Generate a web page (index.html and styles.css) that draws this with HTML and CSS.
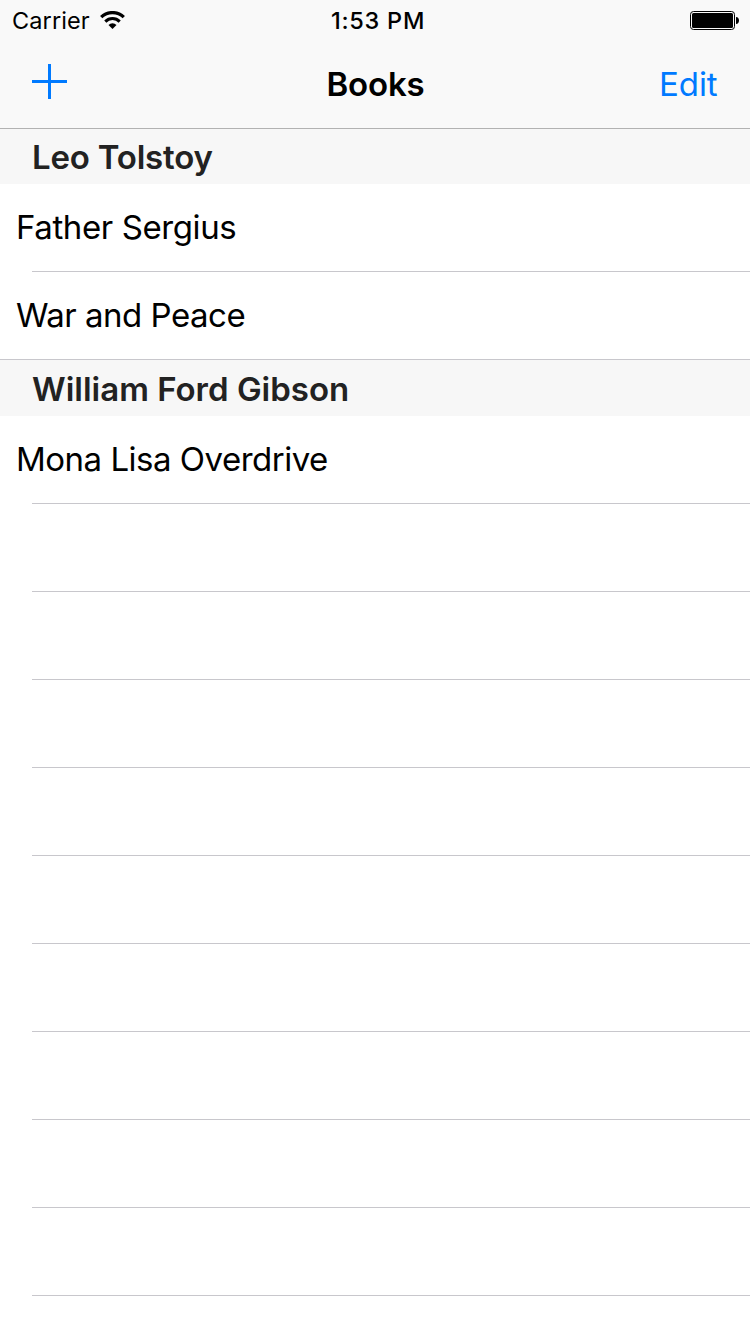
FILE: index.html
```html
<!DOCTYPE html>
<html lang="en">
<head>
<meta charset="utf-8">
<title>Books</title>
<link rel="stylesheet" href="styles.css">
</head>
<body>
<header class="top">
  <div class="status">
    <div class="carrier"><span class="carrier-name">Carrier</span>
      <svg class="wifi" width="25" height="18" viewBox="0 0 25 18"><path d="M1.2 6.2a16 16 0 0 1 22.6 0" fill="none" stroke="#000" stroke-width="3.2"/><path d="M5.3 10.6a10.2 10.2 0 0 1 14.4 0" fill="none" stroke="#000" stroke-width="3"/><path d="M12.5 18l-4-4.1a5.8 5.8 0 0 1 8 0z"/></svg>
    </div>
    <time class="clock">1:53 PM</time>
    <svg class="battery" width="49" height="19" viewBox="0 0 49 19"><rect x=".5" y=".5" width="44" height="18" rx="3" fill="none" stroke="#000"/><rect x="2" y="2" width="41" height="15" rx="1.5"/><path d="M46 6c4 0 4 7 0 7z"/></svg>
  </div>
  <nav class="nav">
    <svg class="add" width="35" height="35" viewBox="0 0 35 35"><path d="M0 17.5h35M17.5 0v35" stroke="#007aff" stroke-width="3"/></svg>
    <h1 class="title">Books</h1>
    <span class="edit">Edit</span>
  </nav>
</header>
<main>
  <h2 class="section tolstoy"><span>Leo Tolstoy</span></h2>
  <ul class="rows">
    <li class="row"><span class="father">Father Sergius</span></li>
    <li class="row last"><span>War and Peace</span></li>
  </ul>
  <h2 class="section second"><span>William Ford Gibson</span></h2>
  <ul class="rows">
    <li class="row"><span>Mona Lisa Overdrive</span></li>
    <li class="row"></li><li class="row"></li><li class="row"></li>
    <li class="row"></li><li class="row"></li><li class="row"></li>
    <li class="row"></li><li class="row"></li><li class="row"></li>
  </ul>
</main>
</body>
</html>
```
FILE: styles.css
```css
* { box-sizing: border-box; }
body { margin: 0; height: 1334px; overflow: hidden; background: #fff; color: #000; font-family: Inter, sans-serif; font-size: 33px; }
h1, h2, ul { margin: 0; padding: 0; font-size: inherit; list-style: none; }
span, time, h1 { white-space: nowrap; }
svg { display: block; }
.top { height: 129px; background: #f9f9f9; border-bottom: 1px solid #b2b2b2; }
.status { height: 40px; padding: 0 11px 0 12px; display: grid; grid-template-columns: 1fr auto 1fr; align-items: center; font-size: 23.5px; }
.carrier { display: flex; align-items: center; gap: 10px; }
.carrier-name { letter-spacing: 0.1px; }
.clock { font-weight: 550; letter-spacing: 0.75px; padding-left: 5px; }
.battery { justify-self: end; }
.nav { height: 88px; padding: 0 32px; display: grid; grid-template-columns: 1fr auto 1fr; align-items: center; }
.add { margin-bottom: 5px; }
.title { font-weight: 600; letter-spacing: -0.2px; padding-left: 1px; }
.edit { justify-self: end; color: #007aff; letter-spacing: -0.1px; padding-right: 0.5px; }
.section { height: 55px; padding-left: 32px; display: flex; align-items: center; background: #f7f7f7; color: #222; font-weight: 600; }
.tolstoy { letter-spacing: -0.2px; }
.section.second { height: 56px; padding-top: 1px; }
.row { height: 88px; padding: 0 0 3px 16px; display: flex; align-items: center; letter-spacing: -0.5px; background: linear-gradient(#c8c7cc, #c8c7cc) 32px 100% / 100% 1px no-repeat; }
.father { letter-spacing: -0.4px; }
.row.last { background-position-x: 0; }
```
